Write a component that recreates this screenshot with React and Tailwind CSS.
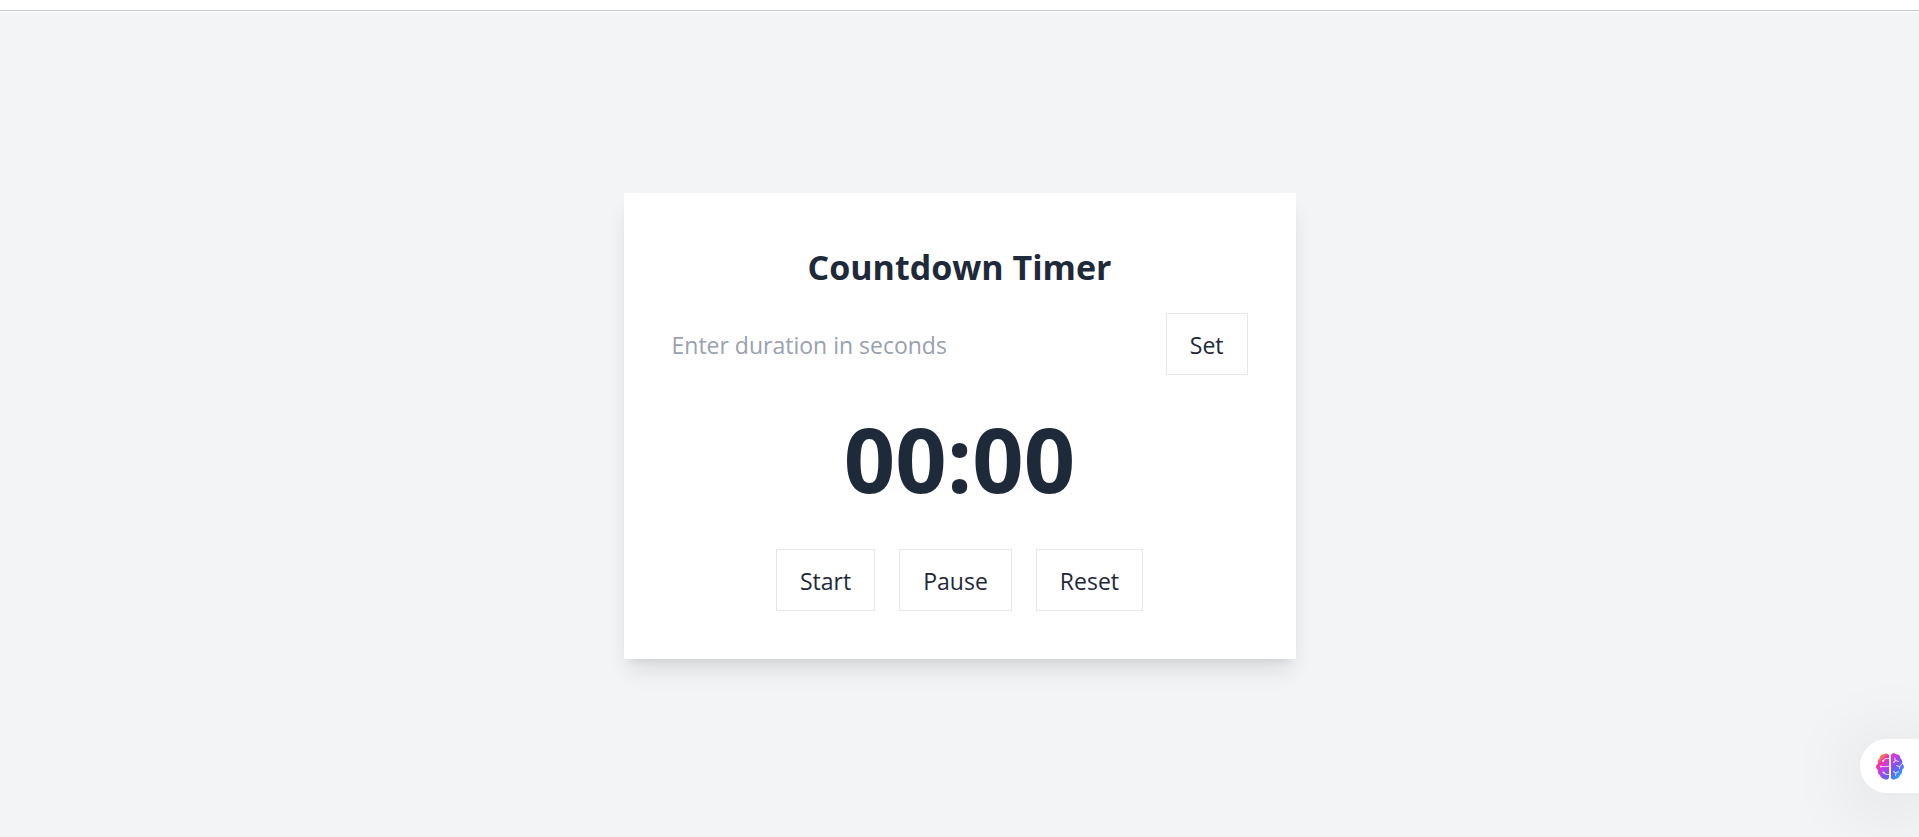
import { useEffect, useState } from "react";

const buttonClass =
  "cursor-pointer border border-gray-200 bg-white px-[23px] pt-[13px] pb-[11px] text-[23px] leading-9 text-gray-800 hover:bg-gray-50";

function BrainIcon() {
  return (
    <svg viewBox="0 0 28 27" className="h-[27px] w-[28px]" fill="none" aria-hidden="true">
      <defs>
        <linearGradient id="brain" x1="4" y1="2" x2="25" y2="24" gradientUnits="userSpaceOnUse">
          <stop offset="0" stopColor="#f9a03c" />
          <stop offset="0.2" stopColor="#f0359f" />
          <stop offset="0.36" stopColor="#d13be0" />
          <stop offset="0.62" stopColor="#7a55f2" />
          <stop offset="0.82" stopColor="#4a7bfa" />
          <stop offset="1" stopColor="#22b5fb" />
        </linearGradient>
      </defs>
      <path
        fill="url(#brain)"
        d="M13 2.2C12 .4 9.3-.1 7.7 1.3 5.2 1.2 3.3 3.2 3.5 5.5 1.8 6.7 1.3 9 2 10.8-.6 12.2-.5 15.5 2 16.9 1.5 19 2.3 21.2 4.1 22.3 4.5 24.6 6.4 26.1 8.5 25.9 10.2 27.3 12.4 26.6 13 24.8ZM15 2.2C16-.1 18.7-.1 20.3 1.3 22.8 1.2 24.7 3.2 24.5 5.5 26.2 6.7 26.7 9 26 10.8 28.6 12.2 28.5 15.5 26 16.9 26.5 19 25.7 21.2 23.9 22.3 23.5 24.6 21.6 26.1 19.5 25.9 17.8 27.3 15.6 26.6 15 24.8Z"
      />
      <g stroke="white" strokeOpacity="0.7" strokeWidth="1.1" strokeLinecap="round" strokeLinejoin="round">
        <path d="M13 5.5H9.5L7 8M13 13.5H5M13 21.5H10L7.5 19.5" />
        <path d="M18.5 5L19.5 7.5 17.5 9.5M19.5 7.5L22.5 8.5M20.5 12.5L23.5 13.7 26 11M23.5 13.7V15.5M17.5 18.5L19.8 20 22.5 18.7M19.8 20L19.5 22.5" />
      </g>
      <g fill="white" fillOpacity="0.75">
        <circle cx="7" cy="8" r="1.1" />
        <circle cx="4.8" cy="13.5" r="1.1" />
        <circle cx="7.5" cy="19.5" r="1.1" />
      </g>
    </svg>
  );
}

export default function App() {
  const [duration, setDuration] = useState("");
  const [timeLeft, setTimeLeft] = useState(0);
  const [running, setRunning] = useState(false);

  useEffect(() => {
    if (!running) return undefined;
    const timer = setInterval(() => setTimeLeft((t) => Math.max(0, t - 1)), 1000);
    return () => clearInterval(timer);
  }, [running]);

  useEffect(() => {
    if (timeLeft === 0) setRunning(false);
  }, [timeLeft]);

  const handleSet = (event) => {
    event.preventDefault();
    const seconds = parseInt(duration, 10);
    if (seconds > 0) {
      setTimeLeft(seconds);
      setRunning(false);
    }
  };

  const handleReset = () => {
    setRunning(false);
    setTimeLeft(parseInt(duration, 10) || 0);
  };

  const minutes = String(Math.floor(timeLeft / 60)).padStart(2, "0");
  const seconds = String(timeLeft % 60).padStart(2, "0");

  return (
    <div className="flex min-h-screen flex-col bg-white font-['Open_Sans','Noto_Sans',sans-serif] text-gray-800">
      <header className="mb-px h-[11px] shrink-0 border-b border-[#c8c8c8] bg-white" />
      <main className="flex flex-1 items-center justify-center bg-gray-100 pt-[3px]">
        <section className="w-full max-w-2xl bg-white px-12 pt-[50px] pb-12 shadow-[0_15px_22px_-4px_rgba(0,0,0,0.1),0_6px_9px_-6px_rgba(0,0,0,0.1)]">
          <h1 className="mb-[22px] text-center text-[34px] leading-[48px] font-bold">Countdown Timer</h1>
          <form onSubmit={handleSet} className="flex items-center gap-6">
            <input
              type="text"
              inputMode="numeric"
              aria-label="Duration in seconds"
              placeholder="Enter duration in seconds"
              value={duration}
              onChange={(event) => setDuration(event.target.value)}
              className="min-w-0 flex-1 bg-white pt-[13px] pb-[11px] text-[23px] leading-9 outline-none placeholder:text-gray-400"
            />
            <button type="submit" className={buttonClass}>
              Set
            </button>
          </form>
          <div className="mt-[38px] mb-[46px] text-center text-[90px] leading-[90px] font-bold">
            {minutes}:{seconds}
          </div>
          <div className="flex justify-center gap-6">
            <button type="button" className={buttonClass} onClick={() => setRunning(timeLeft > 0)}>
              Start
            </button>
            <button type="button" className={buttonClass} onClick={() => setRunning(false)}>
              Pause
            </button>
            <button type="button" className={buttonClass} onClick={handleReset}>
              Reset
            </button>
          </div>
        </section>
      </main>
      <button
        type="button"
        aria-label="Open assistant"
        className="fixed right-0 bottom-11 flex h-[54px] w-[59px] cursor-pointer items-center rounded-l-full bg-white pl-4 shadow-[0_8px_80px_rgba(0,0,0,0.14)]"
      >
        <BrainIcon />
      </button>
    </div>
  );
}
